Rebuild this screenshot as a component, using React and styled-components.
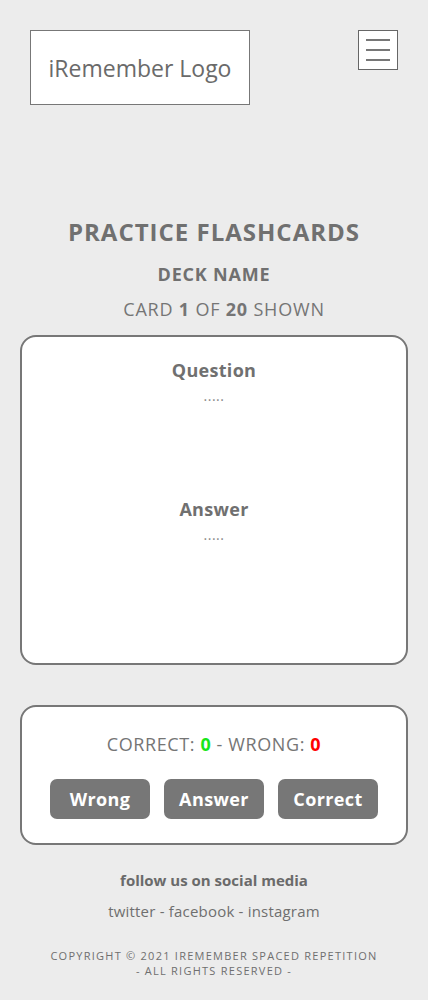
import React from "react";
import styled, { createGlobalStyle } from "styled-components";

const GlobalStyle = createGlobalStyle`
  html, body {
    margin: 0;
    padding: 0;
    background: #ececec;
  }
  body {
    font-family: "Open Sans", "Noto Sans", sans-serif;
    color: #6f6f6f;
  }
`;

const Page = styled.div`
  width: 428px;
  min-height: 1000px;
  box-sizing: border-box;
  padding: 30px 20px 20px;
`;

const Header = styled.header`
  display: flex;
  justify-content: space-between;
  align-items: flex-start;
  padding: 0 10px;
`;

const Logo = styled.div`
  width: 220px;
  height: 75px;
  box-sizing: border-box;
  border: 1px solid #777;
  background: #fff;
  display: flex;
  align-items: center;
  justify-content: center;
  font-size: 23px;
  color: #6a6a6a;
`;

const MenuButton = styled.button`
  width: 40px;
  height: 40px;
  box-sizing: border-box;
  border: 1px solid #666;
  background: #fff;
  padding: 0;
  display: flex;
  flex-direction: column;
  align-items: center;
  justify-content: center;
  gap: 8px;
  cursor: pointer;
`;

const MenuLine = styled.span`
  display: block;
  width: 24px;
  height: 2px;
  background: #777;
`;

const Intro = styled.section`
  margin-top: 110px;
  display: flex;
  flex-direction: column;
  align-items: center;
`;

const Title = styled.h1`
  margin: 0;
  font-size: 24px;
  font-weight: 700;
  letter-spacing: 1px;
  color: #707070;
`;

const DeckName = styled.h2`
  margin: 14px 0 0;
  font-size: 18px;
  font-weight: 700;
  letter-spacing: 0.8px;
  color: #707070;
`;

const Counter = styled.p`
  margin: 11px 0 0;
  padding-left: 20px;
  font-size: 18px;
  letter-spacing: 0.8px;
  color: #757575;

  b {
    font-weight: 700;
  }
`;

const Panel = styled.div`
  background: #fff;
  border: 2px solid #777;
  border-radius: 16px;
  box-sizing: border-box;
  width: 388px;
  margin-top: ${(p) => p.$top}px;
  height: ${(p) => p.$height}px;
  display: flex;
  flex-direction: column;
  align-items: center;
`;

const Block = styled.div`
  display: flex;
  flex-direction: column;
  align-items: center;
  height: ${(p) => p.$height}px;
  padding-top: 21px;
  box-sizing: border-box;
`;

const Label = styled.h3`
  margin: 0;
  font-size: 18px;
  font-weight: 700;
  letter-spacing: 0.3px;
  color: #707070;
`;

const Dots = styled.div`
  margin-top: 4px;
  font-size: 14px;
  letter-spacing: 0.5px;
  color: #888;
`;

const Score = styled.p`
  margin: 25px 0 0;
  font-size: 18px;
  letter-spacing: 0.6px;
  color: #757575;
`;

const Num = styled.b`
  font-weight: 700;
  color: ${(p) => p.$color};
`;

const Buttons = styled.div`
  display: flex;
  gap: 14px;
  margin-top: 23px;
`;

const ActionButton = styled.button`
  width: 100px;
  height: 40px;
  border: none;
  border-radius: 7px;
  background: #777;
  color: #fff;
  font-family: inherit;
  font-size: 18px;
  font-weight: 700;
  letter-spacing: 0.4px;
  cursor: pointer;
`;

const Footer = styled.footer`
  margin-top: 25px;
  display: flex;
  flex-direction: column;
  align-items: center;
  text-align: center;
`;

const FollowTitle = styled.p`
  margin: 0;
  font-size: 15px;
  font-weight: 700;
  color: #6a6a6a;
`;

const Social = styled.p`
  margin: 11px 0 0;
  font-size: 15px;
  letter-spacing: 0.2px;
  color: #6f6f6f;
`;

const Copyright = styled.p`
  margin: 27px 0 0;
  font-size: 11px;
  line-height: 15px;
  letter-spacing: 1.25px;
  color: #6f6f6f;
`;

export default function App() {
  return (
    <>
      <GlobalStyle />
      <Page>
        <Header>
          <Logo>iRemember Logo</Logo>
          <MenuButton aria-label="menu">
            <MenuLine />
            <MenuLine />
            <MenuLine />
          </MenuButton>
        </Header>

        <Intro>
          <Title>PRACTICE FLASHCARDS</Title>
          <DeckName>DECK NAME</DeckName>
          <Counter>
            CARD <b>1</b> OF <b>20</b> SHOWN
          </Counter>

          <Panel $top={14} $height={330}>
            <Block $height={139}>
              <Label>Question</Label>
              <Dots>.....</Dots>
            </Block>
            <Block $height={150}>
              <Label>Answer</Label>
              <Dots>.....</Dots>
            </Block>
          </Panel>

          <Panel $top={40} $height={140}>
            <Score>
              CORRECT: <Num $color="#19e619">0</Num> - WRONG:{" "}
              <Num $color="#ff0000">0</Num>
            </Score>
            <Buttons>
              <ActionButton>Wrong</ActionButton>
              <ActionButton>Answer</ActionButton>
              <ActionButton>Correct</ActionButton>
            </Buttons>
          </Panel>
        </Intro>

        <Footer>
          <FollowTitle>follow us on social media</FollowTitle>
          <Social>twitter - facebook - instagram</Social>
          <Copyright>
            COPYRIGHT © 2021 IREMEMBER SPACED REPETITION
            <br />- ALL RIGHTS RESERVED -
          </Copyright>
        </Footer>
      </Page>
    </>
  );
}
